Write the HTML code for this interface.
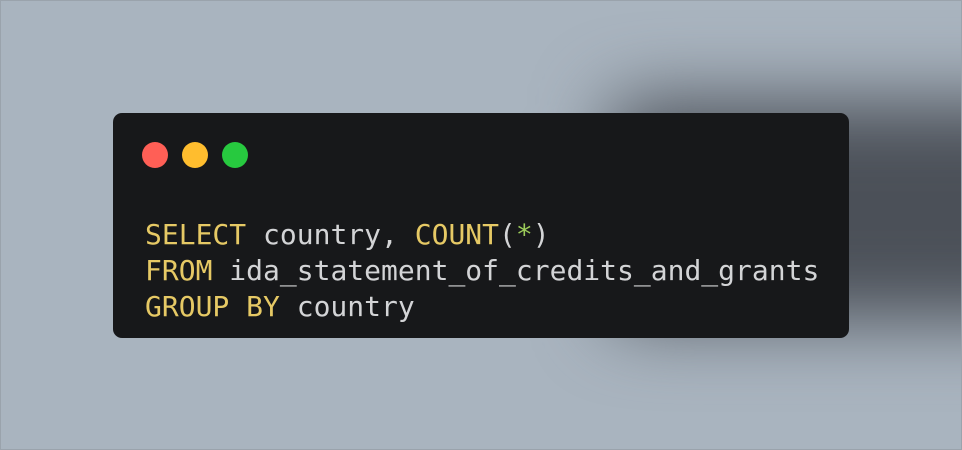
<!DOCTYPE html>
<html><head><style>
html,body{margin:0;padding:0}
body{width:962px;height:450px;overflow:hidden;position:relative;background:#a9b4bf;}
.frame{position:absolute;left:0;top:0;width:960px;height:448px;border:1px solid #9aa3ac;overflow:hidden;background:#a9b4bf}
.sh{position:absolute;left:610px;top:100px;width:600px;height:220px;background:#4b5058;filter:blur(38px);border-radius:20px}
.card{position:absolute;left:112px;top:112px;width:736px;height:225px;background:#17181a;border-radius:9px}
.dot{position:absolute;top:29px;width:26px;height:26px;border-radius:50%}
pre{position:absolute;left:32px;top:104px;margin:0;font-family:"DejaVu Sans Mono","Liberation Mono",monospace;font-size:28px;line-height:36px;color:#d3d4d6}
.k{color:#e6c965}.g{color:#9ccc5a}
</style></head><body><div class="frame">
<div class="sh"></div>
<div class="card">
<div class="dot" style="left:29px;background:#ff5f56"></div>
<div class="dot" style="left:69px;background:#ffbd2e"></div>
<div class="dot" style="left:109px;background:#27c93f"></div>
<pre><span class="k">SELECT</span> country, <span class="k">COUNT</span>(<span class="g">*</span>)
<span class="k">FROM</span> ida_statement_of_credits_and_grants
<span class="k">GROUP BY</span> country</pre>
</div>
</div></body></html>
